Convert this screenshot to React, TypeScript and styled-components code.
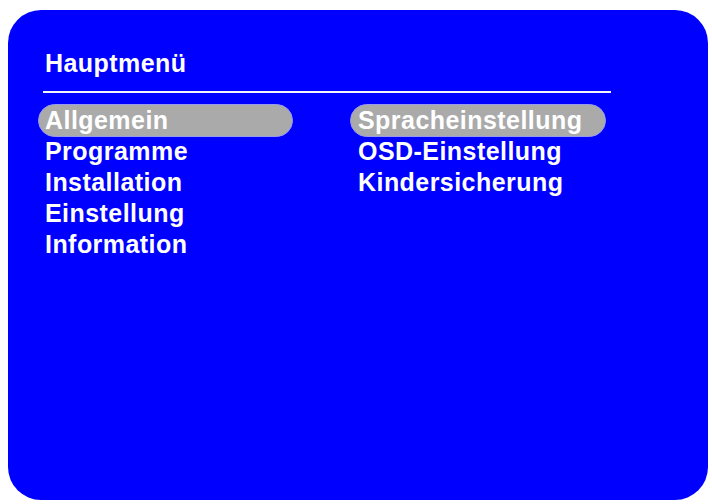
import React from "react";
import styled, { createGlobalStyle } from "styled-components";

const Global = createGlobalStyle`
  html, body { margin: 0; padding: 0; background: #ffffff; }
  body { width: 712px; height: 504px; overflow: hidden; font-family: "Liberation Sans", Arial, sans-serif; }
`;

const Screen = styled.div`
  width: 712px;
  height: 504px;
  padding: 10px 4px 4px 8px;
  box-sizing: border-box;
`;

const Panel = styled.div`
  width: 700px;
  height: 490px;
  box-sizing: border-box;
  background: #0000ff;
  border-radius: 33px;
  padding: 38px 0 0 30px;
  display: flex;
  flex-direction: column;
  color: #ffffff;
  font-weight: 700;
  font-size: 25px;
  letter-spacing: 0.45px;
  line-height: 31px;
`;

const Title = styled.div`
  margin-left: 7px;
  height: 31px;
`;

const Divider = styled.div`
  margin: 12px 0 12px 5px;
  width: 568px;
  height: 2px;
  background: #f4f4ff;
`;

const Columns = styled.div`
  display: flex;
  gap: 57px;
`;

const Column = styled.div<{ $width: number }>`
  width: ${(p) => p.$width}px;
  display: flex;
  flex-direction: column;
`;

const Item = styled.div<{ $active?: boolean; $pad: number }>`
  height: 31px;
  box-sizing: content-box;
  padding-left: ${(p) => p.$pad}px;
  white-space: nowrap;
  border-radius: 17px;
  ${(p) =>
    p.$active
      ? `background: #aaaaaa; border: 1px solid #9a9aee; margin: -1px 0; padding-left: ${p.$pad - 1}px;`
      : ``}
`;

const left = ["Allgemein", "Programme", "Installation", "Einstellung", "Information"];
const right = ["Spracheinstellung", "OSD-Einstellung", "Kindersicherung"];

export default function App() {
  return (
    <>
      <Global />
      <Screen>
        <Panel>
          <Title>Hauptmenü</Title>
          <Divider />
          <Columns>
            <Column $width={255}>
              {left.map((t, i) => (
                <Item key={t} $active={i === 0} $pad={7}>
                  {t}
                </Item>
              ))}
            </Column>
            <Column $width={256}>
              {right.map((t, i) => (
                <Item key={t} $active={i === 0} $pad={8}>
                  {t}
                </Item>
              ))}
            </Column>
          </Columns>
        </Panel>
      </Screen>
    </>
  );
}
